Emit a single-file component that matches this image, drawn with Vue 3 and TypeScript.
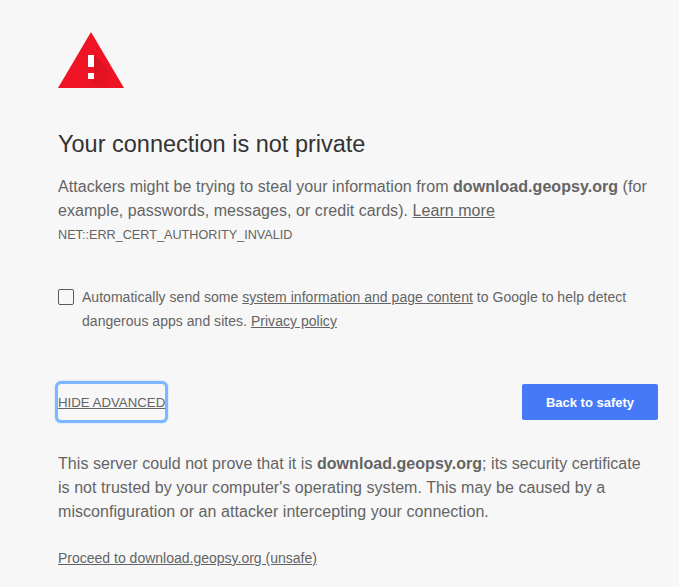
<template>
  <div class="page">
    <svg class="warn-icon" width="66" height="56" viewBox="0 0 66 56" aria-hidden="true">
      <defs>
        <linearGradient id="warn-shade" x1="0" y1="0" x2="1" y2="1">
          <stop offset="0" stop-color="#a80f1a" stop-opacity="0.5" />
          <stop offset="0.8" stop-color="#a80f1a" stop-opacity="0" />
        </linearGradient>
      </defs>
      <polygon points="33,0 66,56 0,56" fill="#ee1423" />
      <polygon points="36,23 52,39 62,56 40,56 30,47 36,41" fill="url(#warn-shade)" />
      <rect x="30" y="23" width="6" height="12" fill="#fff" />
      <rect x="30" y="41" width="6" height="6" fill="#fff" />
    </svg>

    <h1 class="title">Your connection is not private</h1>
    <p class="desc">
      Attackers might be trying to steal your information from <b>download.geopsy.org</b> (for
      example, passwords, messages, or credit cards). <a class="link" href="#">Learn more</a>
    </p>
    <div class="code">NET::ERR_CERT_AUTHORITY_INVALID</div>

    <label class="opt-in">
      <span class="box"></span>
      <span class="opt-text">
        Automatically send some <a class="link" href="#">system information and page content</a> to Google to help detect
        dangerous apps and sites. <a class="link" href="#">Privacy policy</a>
      </span>
    </label>

    <div class="actions">
      <a class="advanced" href="#">HIDE ADVANCED</a>
      <button class="safety" type="button">Back to safety</button>
    </div>

    <p class="details">
      This server could not prove that it is <b>download.geopsy.org</b>; its security certificate
      is not trusted by your computer's operating system. This may be caused by a
      misconfiguration or an attacker intercepting your connection.
    </p>
    <a class="link proceed" href="#">Proceed to download.geopsy.org (unsafe)</a>
  </div>
</template>

<script setup lang="ts">
</script>

<style>
html,
body {
  background: #f7f7f7;
}
</style>

<style scoped>
.page {
  box-sizing: border-box;
  width: 679px;
  height: 587px;
  overflow: hidden;
  padding: 32px 21px 0 58px;
  font-family: "Liberation Sans", Arial, sans-serif;
  color: #646464;
  background: #f7f7f7;
}

.warn-icon {
  display: block;
}

.title {
  margin: 40px 0 0;
  font-size: 23.5px;
  line-height: 32px;
  font-weight: 400;
  color: #333;
}

.desc {
  margin: 15px 0 0;
  font-size: 16px;
  line-height: 24px;
  letter-spacing: 0.05px;
}

.link {
  color: #646464;
  text-decoration: underline;
}

.code {
  margin-top: 4px;
  font-size: 12.67px;
  line-height: 16px;
}

.opt-in {
  display: flex;
  align-items: flex-start;
  gap: 8px;
  margin-top: 42px;
  font-size: 14px;
  line-height: 24px;
  letter-spacing: 0.03px;
}

.box {
  flex: none;
  box-sizing: border-box;
  width: 16px;
  height: 16px;
  margin-top: 4px;
  border: 1px solid #5a5a5a;
  border-radius: 2px;
}

.actions {
  display: flex;
  align-items: center;
  justify-content: space-between;
  margin-top: 51px;
}

.advanced {
  box-sizing: border-box;
  display: block;
  width: 107px;
  padding-top: 1px;
  font-size: 13.25px;
  line-height: 35px;
  color: #646464;
  text-decoration: underline;
  white-space: nowrap;
  border-radius: 3px;
  box-shadow: 0 0 0 3px #7db7ff, 0 0 2px 3px #a9cffd;
}

.safety {
  width: 136px;
  height: 36px;
  border: none;
  border-radius: 2px;
  background: #4579f7;
  color: #fff;
  font-family: inherit;
  font-size: 13px;
  font-weight: 700;
}

.details {
  margin: 32px 10px 0 0;
  font-size: 16px;
  line-height: 24px;
  letter-spacing: 0.05px;
}

.proceed {
  display: block;
  margin-top: 24px;
  font-size: 14px;
  line-height: 20px;
}
</style>
